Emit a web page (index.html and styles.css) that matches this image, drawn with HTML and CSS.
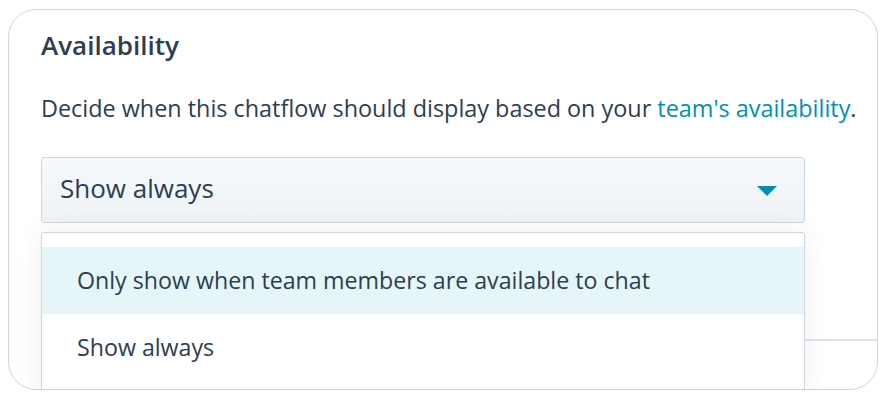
FILE: index.html
```html
<!DOCTYPE html>
<html>
<head>
<meta charset="utf-8">
<link rel="stylesheet" href="styles.css">
</head>
<body>
<div class="card">
  <h2 class="title">Availability</h2>
  <p class="desc">Decide when this chatflow should display based on your <a class="link" href="#">team's availability</a>.</p>
  <div class="field">
    <div class="select">
      <span class="select-value">Show always</span>
      <svg class="caret" width="20" height="10" viewBox="0 0 20 10"><path d="M0 0H20L10 10Z" fill="#0091ae"/></svg>
    </div>
    <div class="menu">
      <div class="item item-active">Only show when team members are available to chat</div>
      <div class="item">Show always</div>
    </div>
  </div>
  <div class="divider"></div>
</div>
</body>
</html>
```
FILE: styles.css
```css
html, body {
  margin: 0;
  padding: 0;
  background: #ffffff;
}
body {
  font-family: "Open Sans", Lato, sans-serif;
  color: #2d3e50;
}
.card {
  margin: 9px 0 0 8px;
  width: 870px;
  height: 381px;
  box-sizing: border-box;
  border: 1px solid #d4d4d4;
  border-radius: 28px;
  overflow: hidden;
  padding: 19px 0 0 32px;
  position: relative;
}
.title {
  margin: 0;
  font-size: 26px;
  line-height: 32px;
  font-weight: 600;
  color: #2d3e50;
}
.desc {
  margin: 32px 0 0;
  font-size: 23.4px;
  line-height: 30px;
  color: #2d3e50;
  white-space: nowrap;
}
.link {
  color: #0091ae;
  text-decoration: none;
}
.field {
  position: relative;
  width: 764px;
  margin-top: 34px;
}
.select {
  height: 66px;
  box-sizing: border-box;
  border: 1px solid #cbd6e2;
  border-radius: 3px;
  background: linear-gradient(#f6f9fb, #eff3f6);
  display: flex;
  align-items: center;
  justify-content: space-between;
  padding: 0 27px 4px 18px;
}
.select-value {
  font-size: 26px;
  color: #2d3e50;
}
.caret {
  display: block;
  margin-top: 6px;
}
.menu {
  position: absolute;
  left: 0;
  right: 0;
  top: 75px;
  height: 170px;
  box-sizing: border-box;
  border: 1px solid #cbd6e2;
  border-radius: 3px;
  background: #ffffff;
  padding-top: 14px;
  box-shadow: 0 0 28px rgba(0, 0, 0, 0.07);
  z-index: 2;
}
.item {
  height: 67px;
  box-sizing: border-box;
  display: flex;
  align-items: center;
  padding: 0 0 2px 35px;
  font-size: 23.2px;
  color: #2d3e50;
  white-space: nowrap;
}
.item-active {
  background: #e5f5f8;
}
.divider {
  margin: 116px 0 0 0;
  height: 2px;
  background: #dfe5ec;
}
```
